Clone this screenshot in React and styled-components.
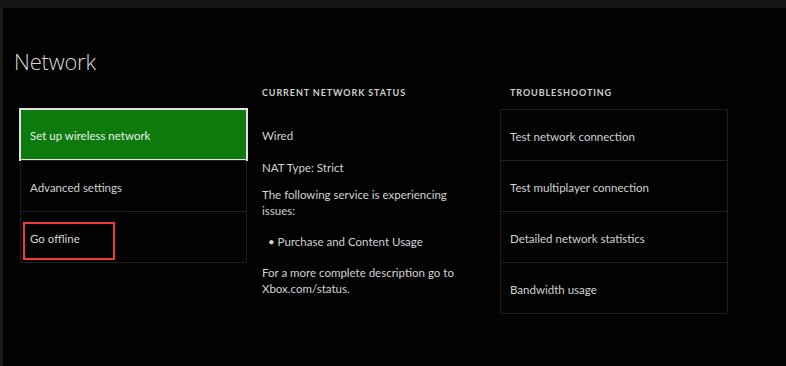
import React from "react";
import styled, { createGlobalStyle } from "styled-components";

const Global = createGlobalStyle`
  html, body { margin: 0; padding: 0; background: #000; }
  body { width: 786px; height: 366px; overflow: hidden; font-family: "Lato", "Open Sans", sans-serif; }
  #root { height: 366px; }
`;

const Screen = styled.div`
  display: flex;
  flex-direction: column;
  width: 786px;
  height: 366px;
  background: #000;
`;

const TopBar = styled.div`
  height: 8px;
  flex: none;
  background: #151515;
`;

const Main = styled.div`
  flex: 1;
  background: #020202;
  border-left: 3px solid #1a1a1a;
  padding: 40px 0 0 11px;
`;

const Title = styled.h1`
  margin: 0;
  height: 26px;
  font-family: "Open Sans", "Lato", sans-serif;
  font-weight: 300;
  font-size: 22px;
  line-height: 26px;
  color: #d8d8d8;
  letter-spacing: -0.2px;
`;

const Columns = styled.div`
  display: grid;
  grid-template-columns: 227px 223px 228px;
  column-gap: 15px;
  margin-left: 6px;
`;

const Column = styled.div`
  display: flex;
  flex-direction: column;
`;

const Header = styled.div`
  height: 35px;
  box-sizing: border-box;
  padding: 13px 0 0 ${(p) => p.$indent || 0}px;
  font-size: 9px;
  line-height: 12px;
  font-weight: 700;
  letter-spacing: 0.9px;
  color: #cfcfcf;
  text-transform: uppercase;
`;

const List = styled.div`
  display: flex;
  flex-direction: column;
  border: 1px solid #1f1f1f;
  border-radius: 1px;
`;

const Item = styled.div`
  position: relative;
  height: 50px;
  box-sizing: content-box;
  display: flex;
  align-items: center;
  padding: 2px 0 0 9px;
  height: 48px;
  font-size: 11.5px;
  color: #d2d2d2;
  border-top: ${(p) => (p.$first ? "none" : "1px solid #1f1f1f")};
  ${(p) =>
    p.$selected &&
    `
    background: #0e7a0e;
    color: #e6f2e6;
    outline: 2px solid #e2e2e2;
    outline-offset: -1px;
    margin: -1px -1px 0;
    height: 49px;
    padding-left: 10px;
  `}
`;

const Highlight = styled.span`
  position: absolute;
  left: 2px;
  top: 10px;
  width: 92px;
  height: 38px;
  box-sizing: border-box;
  border: 2px solid #f03a3a;
`;

const Status = styled.div`
  display: flex;
  flex-direction: column;
  font-size: 11.5px;
  line-height: 16px;
  color: #d2d2d2;
  padding-top: 19px;
`;

const Para = styled.p`
  margin: 0 0 ${(p) => p.$gap}px;
  padding-left: ${(p) => p.$indent || 0}px;
`;

const left = ["Set up wireless network", "Advanced settings", "Go offline"];
const right = [
  "Test network connection",
  "Test multiplayer connection",
  "Detailed network statistics",
  "Bandwidth usage",
];

export default function App() {
  return (
    <>
      <Global />
      <Screen>
        <TopBar />
        <Main>
          <Title>Network</Title>
          <Columns>
            <Column>
              <Header />
              <List>
                {left.map((t, i) => (
                  <Item key={t} $first={i === 0} $selected={i === 0}>
                    {t}
                    {i === 2 && <Highlight />}
                  </Item>
                ))}
              </List>
            </Column>
            <Column>
              <Header>Current network status</Header>
              <Status>
                <Para $gap={16}>Wired</Para>
                <Para $gap={11}>NAT Type: Strict</Para>
                <Para $gap={15}>
                  The following service is experiencing
                  <br />
                  issues:
                </Para>
                <Para $gap={15} $indent={6}>• Purchase and Content Usage</Para>
                <Para $gap={0}>
                  For a more complete description go to
                  <br />
                  Xbox.com/status.
                </Para>
              </Status>
            </Column>
            <Column>
              <Header $indent={10}>Troubleshooting</Header>
              <List>
                {right.map((t, i) => (
                  <Item key={t} $first={i === 0}>
                    {t}
                  </Item>
                ))}
              </List>
            </Column>
          </Columns>
        </Main>
      </Screen>
    </>
  );
}
